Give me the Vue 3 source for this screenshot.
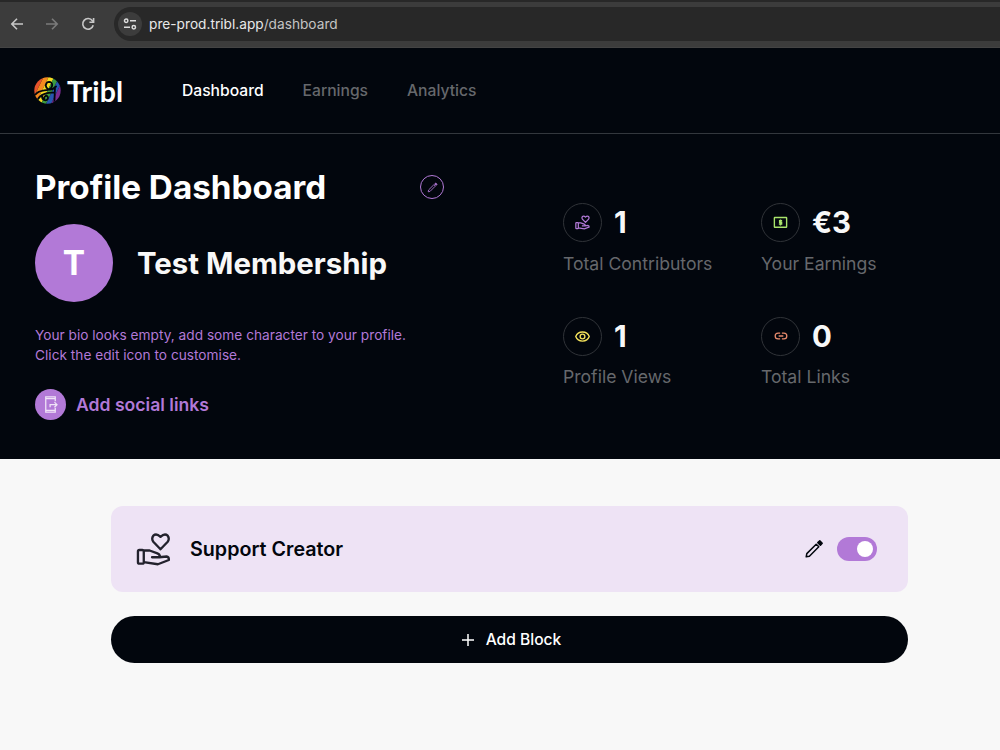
<template>
  <div class="screen">
    <div class="browser-bar">
      <svg class="browser-icon back" viewBox="0 0 16 16">
        <path d="M14 8H3M8 2.8 2.8 8 8 13.2" />
      </svg>
      <svg class="browser-icon forward" viewBox="0 0 16 16">
        <path d="M2 8h11M8 2.8 13.2 8 8 13.2" />
      </svg>
      <svg class="browser-icon reload" viewBox="0 0 16 16">
        <path d="M13.2 9.2A5.3 5.3 0 1 1 12.4 4.8L13.5 6" />
        <path d="M13.6 2v4.2H9.4" />
      </svg>
      <div class="address">
        <div class="site-info">
          <svg viewBox="0 0 16 16">
            <circle cx="4.2" cy="4.8" r="1.7" />
            <path d="M8 4.8h6M2 11.2h6" />
            <circle cx="11.8" cy="11.2" r="1.7" />
          </svg>
        </div>
        <span class="url">pre-prod.tribl.app<span class="path">/dashboard</span></span>
      </div>
    </div>

    <header class="site-header">
      <div class="logo">
        <svg class="logo-mark" viewBox="0 0 27 27">
          <defs>
            <clipPath id="disc"><circle cx="13.5" cy="13.5" r="13.2" /></clipPath>
          </defs>
          <g clip-path="url(#disc)">
            <g transform="rotate(26 13.5 13.5)">
              <rect x="-3" y="-3" width="7" height="33" fill="#e8532c" />
              <rect x="4" y="-3" width="4.6" height="33" fill="#f58a1f" />
              <rect x="8.6" y="-3" width="5" height="33" fill="#f6dc23" />
              <rect x="13.6" y="-3" width="4.4" height="33" fill="#3c9a3f" />
              <rect x="18" y="-3" width="4.6" height="33" fill="#2757b0" />
              <rect x="22.6" y="-3" width="8" height="33" fill="#7a2c91" />
            </g>
            <path
              class="logo-line"
              d="M1.5 17.5C5 13 10 14 14.5 12.6C19.5 11 19 4.8 15.2 4.8C11.5 5 10.5 10 14 12C17 13.5 20 11.5 22 9.5M4 22C7 16.5 13 15.8 20.5 15.4M8 18C7.5 24.5 14 24.5 14 20.8C13.8 17.5 9.5 18.5 10.3 21.5M21 10.5L20.3 27"
            />
          </g>
        </svg>
        <span class="logo-text">Tribl</span>
      </div>
      <nav class="nav">
        <a v-for="item in navItems" :key="item" :class="{ active: item === current }" @click="current = item">{{ item }}</a>
      </nav>
    </header>

    <section class="hero">
      <div class="profile">
        <div class="title-row">
          <h1>Profile Dashboard</h1>
          <button class="edit-btn">
            <svg viewBox="0 0 20 20">
              <path d="M2.2 17.8 2.8 14.6 12.2 5.2 14.8 7.8 5.4 17.2Z" />
              <path class="tip" d="M13.8 3.6 15.8 1.8 18.2 4.2 16.4 6.2Z" />
            </svg>
          </button>
        </div>
        <div class="member">
          <div class="avatar">T</div>
          <h2>Test Membership</h2>
        </div>
        <p class="bio">
          Your bio looks empty, add some character to your profile.<br />
          Click the edit icon to customise.
        </p>
        <div class="social">
          <div class="social-icon">
            <svg viewBox="0 0 24 24">
              <path d="M18 8V2.5H6v19h12V16M6 4.5h12M6 19.5h12" />
              <path d="M11.5 15.5v-3.3h8M17 9l3.2 3.2L17 15.4" />
            </svg>
          </div>
          <span>Add social links</span>
        </div>
      </div>

      <div class="stats">
        <div class="stat" v-for="stat in stats" :key="stat.label">
          <div class="stat-top">
            <div class="stat-icon" :class="stat.icon">
              <svg v-if="stat.icon === 'hand'" viewBox="0 0 36 36">
                <path :d="handPath" />
              </svg>
              <svg v-else-if="stat.icon === 'money'" viewBox="0 0 24 24">
                <rect x="2.2" y="4" width="19.6" height="15.6" rx="0.8" />
                <path d="M14.6 9.2H10.6v2.6h3.2v2.6H9.4M12 7.2v9.4" />
              </svg>
              <svg v-else-if="stat.icon === 'eye'" viewBox="0 0 24 24">
                <path d="M1.2 12C3 7.3 7 4.7 12 4.7S21 7.3 22.8 12C21 16.7 17 19.3 12 19.3S3 16.7 1.2 12Z" />
                <circle cx="12" cy="12" r="3.8" />
              </svg>
              <svg v-else viewBox="0 0 24 24">
                <path d="M10.5 7H7a5 5 0 0 0 0 10h3.5M13.5 7H17a5 5 0 0 1 0 10h-3.5M8 12h8" />
              </svg>
            </div>
            <span class="stat-value">{{ stat.value }}</span>
          </div>
          <div class="stat-label">{{ stat.label }}</div>
        </div>
      </div>
    </section>

    <main class="blocks">
      <div class="block">
        <svg class="block-icon" viewBox="0 0 36 36">
          <path :d="handPath" />
        </svg>
        <span class="block-name">Support Creator</span>
        <svg class="block-edit" viewBox="0 0 20 20">
          <path d="M2.2 17.8 2.8 14.6 12.2 5.2 14.8 7.8 5.4 17.2Z" />
          <path class="tip" d="M13.8 3.6 15.8 1.8 18.2 4.2 16.4 6.2Z" />
        </svg>
        <button class="toggle" :class="{ on: enabled }" @click="enabled = !enabled">
          <span class="knob"></span>
        </button>
      </div>
      <button class="add-block">
        <svg viewBox="0 0 14 14"><path d="M7 1v12M1 7h12" /></svg>
        Add Block
      </button>
    </main>
  </div>
</template>

<script setup>
import { ref } from 'vue'

const navItems = ['Dashboard', 'Earnings', 'Analytics']
const current = ref('Dashboard')
const enabled = ref(true)

const stats = [
  { icon: 'hand', value: '1', label: 'Total Contributors' },
  { icon: 'money', value: '€3', label: 'Your Earnings' },
  { icon: 'eye', value: '1', label: 'Profile Views' },
  { icon: 'link', value: '0', label: 'Total Links' },
]

// open hand holding a heart, shared by the stat and the block
const handPath =
  'M3.5 18.5H6.5Q8 18.5 8 20V31Q8 32.5 6.5 32.5H3.5Q2 32.5 2 31V20Q2 18.5 3.5 18.5Z' +
  'M8 19H14L22 22Q25 23.2 24.3 26H16.5' +
  'M24 26L31.5 25.2Q34 25.5 33.8 28.8L22.5 33.2L8 31' +
  'M25.2 17.8L17.8 10Q15.6 6.8 17.8 3.8Q21 1 25.2 5Q29.4 1 32.6 3.8Q34.8 6.8 32.6 10Z'
</script>

<style>
body {
  background: #f8f8f8;
}
</style>

<style scoped>
.screen {
  display: flex;
  flex-direction: column;
  height: 750px;
  overflow: hidden;
  background: #f8f8f8;
  font-family: Inter, "Liberation Sans", sans-serif;
  color: #fff;
}

svg {
  display: block;
  fill: none;
  stroke: currentColor;
}

button {
  font: inherit;
  padding: 0;
  cursor: pointer;
}

.browser-bar {
  box-sizing: border-box;
  height: 48px;
  flex: none;
  display: flex;
  align-items: center;
  padding: 0 0 2px 9px;
  background: #3c3c3c;
  border-top: 2px solid #282828;
  border-bottom: 1px solid #444;
}

.browser-icon {
  width: 16px;
  height: 16px;
  stroke-width: 1.6;
  color: #c7c7c7;
}

.forward {
  margin-left: 19px;
  color: #7b7b7b;
}

.reload {
  margin-left: 20px;
}

.address {
  flex: 1;
  display: flex;
  align-items: center;
  height: 34px;
  margin-left: 18px;
  padding-left: 4px;
  border-radius: 17px 0 0 17px;
  background: #282828;
}

.site-info {
  width: 24px;
  height: 24px;
  border-radius: 50%;
  background: #3c3c3c;
  display: flex;
  align-items: center;
  justify-content: center;
}

.site-info svg {
  width: 16px;
  height: 16px;
  stroke-width: 1.5;
  color: #dcdcdc;
}

.url {
  margin-left: 7px;
  font-size: 13.7px;
  color: #e8e8e8;
}

.path {
  color: #c4c4c4;
}

.site-header {
  box-sizing: border-box;
  height: 86px;
  flex: none;
  display: flex;
  align-items: center;
  padding-left: 34px;
  background: #02060d;
  border-bottom: 1px solid #33373d;
}

.logo {
  display: flex;
  align-items: center;
  width: 148px;
}

.logo-mark {
  width: 27px;
  height: 27px;
  stroke: none;
}

.logo-line {
  stroke: #02060d;
  stroke-width: 1.8;
  stroke-linecap: round;
}

.logo-text {
  margin-left: 6px;
  font-family: Lato, sans-serif;
  font-size: 28.5px;
  font-weight: 700;
  line-height: 32px;
  letter-spacing: 0.2px;
}

.nav {
  display: flex;
  gap: 39px;
  font-size: 15.65px;
  font-weight: 500;
}

.nav a {
  color: #66686c;
  cursor: pointer;
}

.nav a.active {
  color: #fff;
}

.hero {
  box-sizing: border-box;
  height: 325px;
  flex: none;
  display: flex;
  padding-left: 35px;
  background: #02060d;
}

.profile {
  width: 409px;
  padding-top: 33px;
}

.title-row {
  display: flex;
  align-items: center;
  justify-content: space-between;
  height: 40px;
}

h1,
h2,
p {
  margin: 0;
}

h1 {
  font-size: 33.25px;
  font-weight: 700;
}

.edit-btn {
  box-sizing: border-box;
  width: 24px;
  height: 24px;
  display: flex;
  align-items: center;
  justify-content: center;
  background: none;
  border: 1px solid #b279d7;
  border-radius: 50%;
  color: #b279d7;
}

.edit-btn svg {
  width: 11px;
  height: 11px;
  stroke-width: 1.6;
}

.member {
  display: flex;
  align-items: center;
  gap: 24px;
  margin-top: 17px;
}

.avatar {
  width: 78px;
  height: 78px;
  border-radius: 50%;
  background: #b279d7;
  display: flex;
  align-items: center;
  justify-content: center;
  font-size: 33.5px;
  font-weight: 700;
}

h2 {
  font-size: 29.4px;
  font-weight: 700;
  color: #f8f8f8;
}

.bio {
  margin-top: 24px;
  font-size: 13.7px;
  line-height: 19.6px;
  color: #b279d7;
}

.social {
  display: flex;
  align-items: center;
  gap: 10px;
  margin-top: 24px;
  font-size: 17.6px;
  font-weight: 600;
  color: #b279d7;
}

.social-icon {
  width: 31px;
  height: 31px;
  border-radius: 50%;
  background: #b279d7;
  color: #f0e4f7;
  display: flex;
  align-items: center;
  justify-content: center;
}

.social-icon svg {
  width: 19px;
  height: 19px;
  stroke-width: 1.6;
}

.stats {
  display: grid;
  grid-template-columns: 198px 198px;
  grid-template-rows: 113.6px 113.6px;
  margin-left: 119px;
  padding-top: 69px;
}

.stat-top {
  display: flex;
  align-items: center;
  gap: 12px;
}

.stat-icon {
  box-sizing: border-box;
  width: 39px;
  height: 39px;
  border: 1px solid #303338;
  border-radius: 50%;
  display: flex;
  align-items: center;
  justify-content: center;
}

.stat-icon svg {
  width: 15px;
  height: 15px;
  stroke-width: 2.2;
}

.stat-icon.hand {
  color: #b279d7;
}

.stat-icon.hand svg {
  stroke-width: 3;
}

.stat-icon.money {
  color: #a8e46b;
}

.stat-icon.eye {
  color: #f3e15b;
}

.stat-icon.link {
  color: #e98b6d;
}

.stat-icon.link svg {
  width: 14px;
  height: 14px;
}

.stat-value {
  font-size: 29.4px;
  font-weight: 700;
  line-height: 39px;
  color: #f8f8f8;
}

.stat-label {
  margin-top: 10.5px;
  font-size: 17.6px;
  line-height: 22px;
  color: #66686c;
}

.blocks {
  display: flex;
  flex-direction: column;
  gap: 24px;
  padding: 47px 92px 0 111px;
}

.block {
  box-sizing: border-box;
  height: 86px;
  display: flex;
  align-items: center;
  padding: 0 31px 0 25px;
  border-radius: 12px;
  background: #eee3f5;
  color: #02060d;
}

.block-icon {
  width: 35px;
  height: 35px;
  stroke-width: 2.4;
  stroke-linejoin: round;
  stroke-linecap: round;
  color: #23222d;
}

.block-name {
  flex: 1;
  margin-left: 19px;
  font-size: 19.7px;
  font-weight: 600;
}

.block-edit {
  width: 20px;
  height: 20px;
  margin-right: 13px;
  stroke-width: 1.5;
  stroke-linejoin: round;
}

.tip {
  fill: currentColor;
}

.toggle {
  box-sizing: border-box;
  width: 40px;
  height: 24px;
  display: flex;
  align-items: center;
  padding: 0 4px;
  border: none;
  border-radius: 12px;
  background: #c8c8c8;
}

.toggle.on {
  justify-content: flex-end;
  background: #b279d7;
}

.knob {
  width: 16px;
  height: 16px;
  border-radius: 50%;
  background: #fff;
}

.add-block {
  height: 47px;
  display: flex;
  align-items: center;
  justify-content: center;
  gap: 11px;
  padding-left: 3px;
  border: none;
  border-radius: 24px;
  background: #02060d;
  color: #fff;
  font-size: 15.6px;
  font-weight: 500;
}

.add-block svg {
  width: 14px;
  height: 14px;
  stroke-width: 1.5;
}
</style>
